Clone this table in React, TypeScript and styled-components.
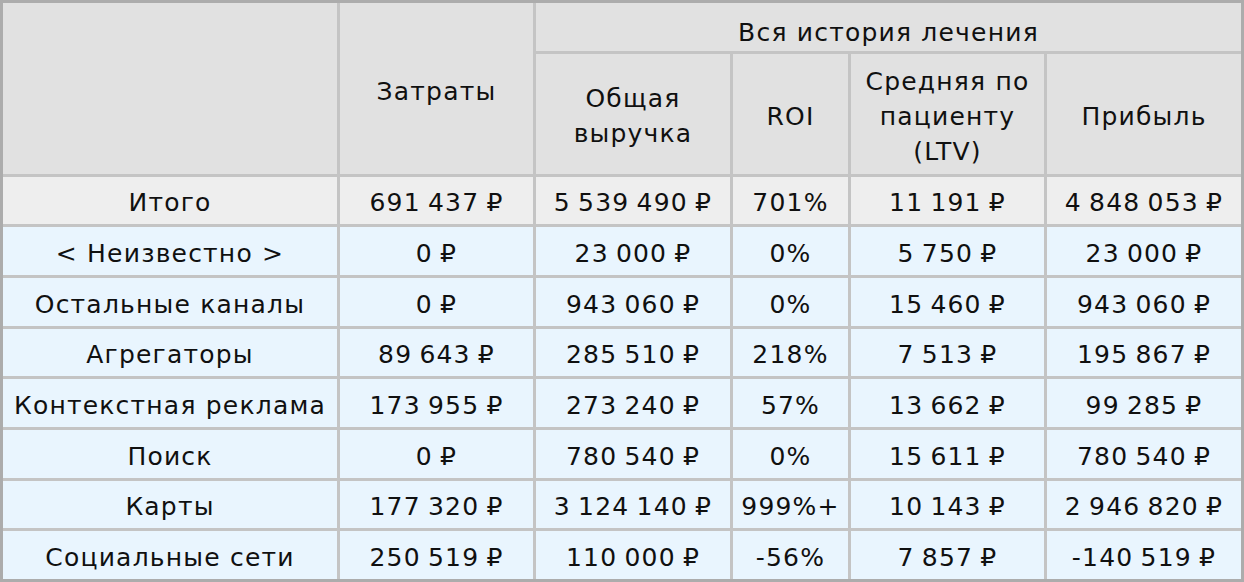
import React from "react";
import styled, { createGlobalStyle } from "styled-components";

const GlobalStyle = createGlobalStyle`
  body {
    margin: 0;
    background: #ffffff;
    font-family: "DejaVu Sans", "Open Sans", sans-serif;
  }
`;

const Table = styled.div`
  display: grid;
  grid-template-columns: 334px 193px 194px 115px 193px 194px;
  grid-template-rows: 48px 120px 47px 48px 48px 47px 48px 48px 47px 48px;
  gap: 3px;
  width: 1238px;
  border: 3px solid #acacac;
  background: #c4c4c4;
  color: #101010;
  font-size: 25px;
  letter-spacing: 1.2px;
`;

const HeadCell = styled.div<{ $col?: string; $row?: string; $pad?: number }>`
  grid-column: ${(p) => p.$col || "auto"};
  grid-row: ${(p) => p.$row || "auto"};
  display: flex;
  align-items: center;
  justify-content: center;
  text-align: center;
  line-height: 35px;
  background: #e1e1e1;
  padding-top: ${(p) => p.$pad ?? 4}px;
`;

const Cell = styled.div<{ $total?: boolean }>`
  display: flex;
  align-items: center;
  justify-content: center;
  white-space: nowrap;
  padding-top: 4px;
  background: ${(p) => (p.$total ? "#eeeeee" : "#e9f5fe")};
`;

const Amount = styled(Cell)`
  word-spacing: -2px;
`;

type Row = {
  name: string;
  cost: string;
  revenue: string;
  roi: string;
  ltv: string;
  profit: string;
};

const rows: Row[] = [
  { name: "Итого", cost: "691 437 ₽", revenue: "5 539 490 ₽", roi: "701%", ltv: "11 191 ₽", profit: "4 848 053 ₽" },
  { name: "< Неизвестно >", cost: "0 ₽", revenue: "23 000 ₽", roi: "0%", ltv: "5 750 ₽", profit: "23 000 ₽" },
  { name: "Остальные каналы", cost: "0 ₽", revenue: "943 060 ₽", roi: "0%", ltv: "15 460 ₽", profit: "943 060 ₽" },
  { name: "Агрегаторы", cost: "89 643 ₽", revenue: "285 510 ₽", roi: "218%", ltv: "7 513 ₽", profit: "195 867 ₽" },
  { name: "Контекстная реклама", cost: "173 955 ₽", revenue: "273 240 ₽", roi: "57%", ltv: "13 662 ₽", profit: "99 285 ₽" },
  { name: "Поиск", cost: "0 ₽", revenue: "780 540 ₽", roi: "0%", ltv: "15 611 ₽", profit: "780 540 ₽" },
  { name: "Карты", cost: "177 320 ₽", revenue: "3 124 140 ₽", roi: "999%+", ltv: "10 143 ₽", profit: "2 946 820 ₽" },
  { name: "Социальные сети", cost: "250 519 ₽", revenue: "110 000 ₽", roi: "-56%", ltv: "7 857 ₽", profit: "-140 519 ₽" },
];

const App: React.FC = () => {
  return (
    <>
      <GlobalStyle />
      <Table>
        <HeadCell $col="1" $row="1 / span 2" />
        <HeadCell $col="2" $row="1 / span 2" $pad={6}>Затраты</HeadCell>
        <HeadCell $col="3 / span 4" $row="1" $pad={10}>Вся история лечения</HeadCell>
        <HeadCell $col="3" $row="2">Общая<br />выручка</HeadCell>
        <HeadCell $col="4" $row="2">ROI</HeadCell>
        <HeadCell $col="5" $row="2">Средняя по<br />пациенту<br />(LTV)</HeadCell>
        <HeadCell $col="6" $row="2">Прибыль</HeadCell>

        {rows.map((r, i) => (
          <React.Fragment key={r.name}>
            <Cell $total={i === 0}>{r.name}</Cell>
            <Amount $total={i === 0}>{r.cost}</Amount>
            <Amount $total={i === 0}>{r.revenue}</Amount>
            <Cell $total={i === 0}>{r.roi}</Cell>
            <Amount $total={i === 0}>{r.ltv}</Amount>
            <Amount $total={i === 0}>{r.profit}</Amount>
          </React.Fragment>
        ))}
      </Table>
    </>
  );
};

export default App;
